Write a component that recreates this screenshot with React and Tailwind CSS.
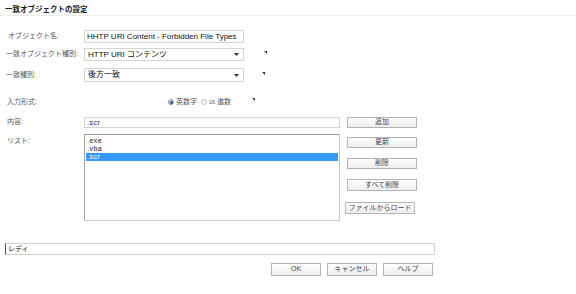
import React from "react";

const jp = "font-['Liberation_Sans','Noto_Sans_CJK_JP',sans-serif]";

function Mark({ className }) {
  return (
    <svg width="3" height="3" viewBox="0 0 3 3" className={className}>
      <path d="M0 0 L3 0 L3 3 Z" fill="#333" />
    </svg>
  );
}

function Btn({ children, className = "" }) {
  return (
    <div
      className={
        "flex items-center justify-center border border-[#b4b4b4] bg-gradient-to-b from-white to-[#ececec] text-[7px] text-[#444] " +
        className
      }
    >
      {children}
    </div>
  );
}

function Select({ value }) {
  return (
    <div className="flex items-center justify-between w-[160px] h-full border border-[#d4d4d4] bg-white pl-[3px] pr-[4px] text-[8px] text-[#111]">
      <span>{value}</span>
      <svg width="5" height="3" viewBox="0 0 5 3">
        <path d="M0 0 L5 0 L2.5 3 Z" fill="#333" />
      </svg>
    </div>
  );
}

export default function App() {
  const items = [".exe", ".vba", ".scr"];
  return (
    <div className={"w-[576px] h-[294px] bg-white text-[#555] " + jp}>
      <div className="h-[16px] pl-[5px] pt-[5px] border-b border-[#ececec] text-[7.5px] font-bold text-[#222] leading-[9px]">
        一致オブジェクトの設定
      </div>

      <div className="pl-[5px]">
        {/* name */}
        <div className="flex items-center h-[13px] mt-[14px]">
          <div className="w-[79px] pl-[3px] text-[7px]">オブジェクト名:</div>
          <div className="w-[160px] h-full border border-[#d4d4d4] pl-[2px] text-[8px] leading-[11px] text-[#111] whitespace-nowrap overflow-hidden">
            HHTP URI Content - Forbidden File Types
          </div>
        </div>

        {/* type */}
        <div className="flex items-center h-[13px] mt-[5px]">
          <div className="w-[79px] pl-[1px] text-[7px]">一致オブジェクト種別:</div>
          <Select value="HTTP URI コンテンツ" />
          <Mark className="ml-[20px] -mt-[4px]" />
        </div>

        {/* match */}
        <div className="flex items-center h-[14px] mt-[7px]">
          <div className="w-[79px] pl-[1px] text-[7px]">一致種別:</div>
          <Select value="後方一致" />
          <Mark className="ml-[18px] -mt-[4px]" />
        </div>

        {/* input format */}
        <div className="flex items-center h-[12px] mt-[14px] text-[7px]">
          <div className="w-[79px] pl-[2px]">入力形式:</div>
          <div className="ml-[84px] flex items-center">
            <div className="w-[6px] h-[6px] rounded-full border border-[#7a8ea8] bg-[#dfe8f3] flex items-center justify-center">
              <div className="w-[3px] h-[3px] rounded-full bg-[#1f5fa8]" />
            </div>
            <span className="ml-[2px]">英数字</span>
            <div className="ml-[4px] w-[6px] h-[6px] rounded-full border border-[#c4c4c4] bg-[#f3f3f3]" />
            <span className="ml-[2px] text-[5.5px]">16</span>
            <span className="ml-[2px]">進数</span>
            <Mark className="ml-[21px] -mt-[6px]" />
          </div>
        </div>

        {/* content */}
        <div className="flex items-center h-[11px] mt-[9px]">
          <div className="w-[79px] pl-[2px] text-[7px]">内容:</div>
          <div className="w-[256px] h-full border border-[#d4d4d4] pl-[2px] text-[7px] leading-[9px] text-[#222] tracking-[0.5px]">
            .scr
          </div>
          <Btn className="ml-[7px] w-[70px] h-[11px]">追加</Btn>
        </div>

        {/* list */}
        <div className="flex items-start mt-[6px]">
          <div className="w-[79px] pl-[2px] pt-[2px] text-[7px]">リスト:</div>
          <div className="w-[256px] h-[87px] border border-[#c8c8c8] border-t-[#a0a0a0] border-l-[#a0a0a0] pt-[2px] px-[1px] text-[7px] text-[#222] tracking-[0.5px]">
            {items.map((it, i) => (
              <div
                key={it}
                className={
                  "h-[8px] leading-[8px] pl-[1px] " +
                  (i === 2 ? "bg-[#3399ff] text-white" : "")
                }
              >
                {it}
              </div>
            ))}
          </div>
          <div className="ml-[7px] flex flex-col">
            <Btn className="mt-[3px] w-[70px] h-[11px]">更新</Btn>
            <Btn className="mt-[10px] w-[70px] h-[11px]">削除</Btn>
            <Btn className="mt-[10px] w-[70px] h-[12px]">すべて削除</Btn>
            <Btn className="mt-[11px] -ml-[2px] w-[70px] h-[12px]">ファイルからロード</Btn>
          </div>
        </div>

        {/* status */}
        <div className="mt-[22px] w-[430px] h-[12px] border border-[#d0d0d0] border-l-[#555] pl-[2px] text-[7px] leading-[10px] text-[#111]">
          レディ
        </div>

        <div className="w-[428px] mt-[8px] flex justify-end gap-[6px]">
          <Btn className="w-[50px] h-[13px] text-[6px]">OK</Btn>
          <Btn className="w-[50px] h-[13px]">キャンセル</Btn>
          <Btn className="w-[50px] h-[13px]">ヘルプ</Btn>
        </div>
      </div>
    </div>
  );
}
